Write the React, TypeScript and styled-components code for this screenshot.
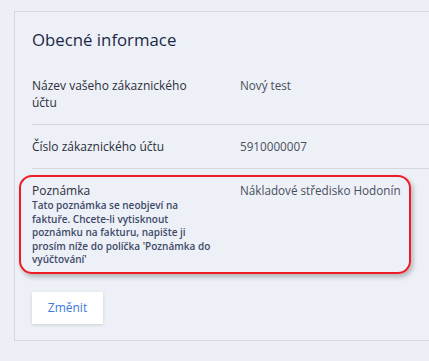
import React from "react";
import styled, { createGlobalStyle } from "styled-components";

const Global = createGlobalStyle`
  html, body { margin: 0; padding: 0; }
  body {
    background: #eceff6;
    font-family: "Open Sans", "Noto Sans", sans-serif;
    overflow: hidden;
    width: 429px;
    height: 361px;
  }
`;

const Page = styled.div`
  padding: 11px 0 0 14px;
`;

const Card = styled.section`
  width: 440px;
  box-sizing: border-box;
  border: 1px solid #d6d9df;
  background: #edf0f7;
  padding: 16px 0 16px 17px;
`;

const Title = styled.h2`
  margin: 0 0 12px;
  font-size: 16.8px;
  font-weight: 500;
  line-height: 24px;
  color: #1b2846;
`;

const Row = styled.div<{ $last?: boolean }>`
  display: grid;
  grid-template-columns: 208px 1fr;
  padding: 13px 0;
  border-bottom: ${(p) => (p.$last ? "none" : "1px solid #d4d7de")};
  position: relative;
`;

const Label = styled.div`
  padding-right: 28px;
  font-size: 12px;
  line-height: 17px;
  color: #2b2f3a;
`;

const Value = styled.div`
  font-size: 11.7px;
  line-height: 17px;
  color: #4a4f5c;
`;

const Hint = styled.div`
  font-size: 10px;
  font-weight: 600;
  line-height: 13.6px;
  color: #3e4a68;
`;

const Highlight = styled.div`
  position: absolute;
  left: -13px;
  top: 6px;
  width: 392px;
  bottom: 6px;
  border: 2px solid #ee1c25;
  border-radius: 13px;
  box-sizing: border-box;
  box-shadow: 2px 3px 5px rgba(0, 0, 0, 0.25);
  pointer-events: none;
`;

const Actions = styled.div`
  padding-top: 12px;
`;

const Button = styled.button`
  display: block;
  width: 71px;
  height: 32px;
  border: none;
  background: #ffffff;
  box-shadow: 0 1px 3px rgba(0, 0, 0, 0.15);
  color: #3b7ad6;
  font-family: "Open Sans", "Noto Sans", sans-serif;
  font-size: 12px;
  padding: 0;
  cursor: pointer;
`;

export default function App() {
  return (
    <>
      <Global />
      <Page>
        <Card>
          <Title>Obecné informace</Title>
          <Row>
            <Label>Název vašeho zákaznického účtu</Label>
            <Value>Nový test</Value>
          </Row>
          <Row>
            <Label>Číslo zákaznického účtu</Label>
            <Value>5910000007</Value>
          </Row>
          <Row $last>
            <Highlight />
            <Label>
              Poznámka
              <Hint>
                Tato poznámka se neobjeví na faktuře. Chcete-li vytisknout
                poznámku na fakturu, napište ji prosím níže do políčka
                'Poznámka do vyúčtování'
              </Hint>
            </Label>
            <Value>Nákladové středisko Hodonín</Value>
          </Row>
          <Actions>
            <Button>Změnit</Button>
          </Actions>
        </Card>
      </Page>
    </>
  );
}
